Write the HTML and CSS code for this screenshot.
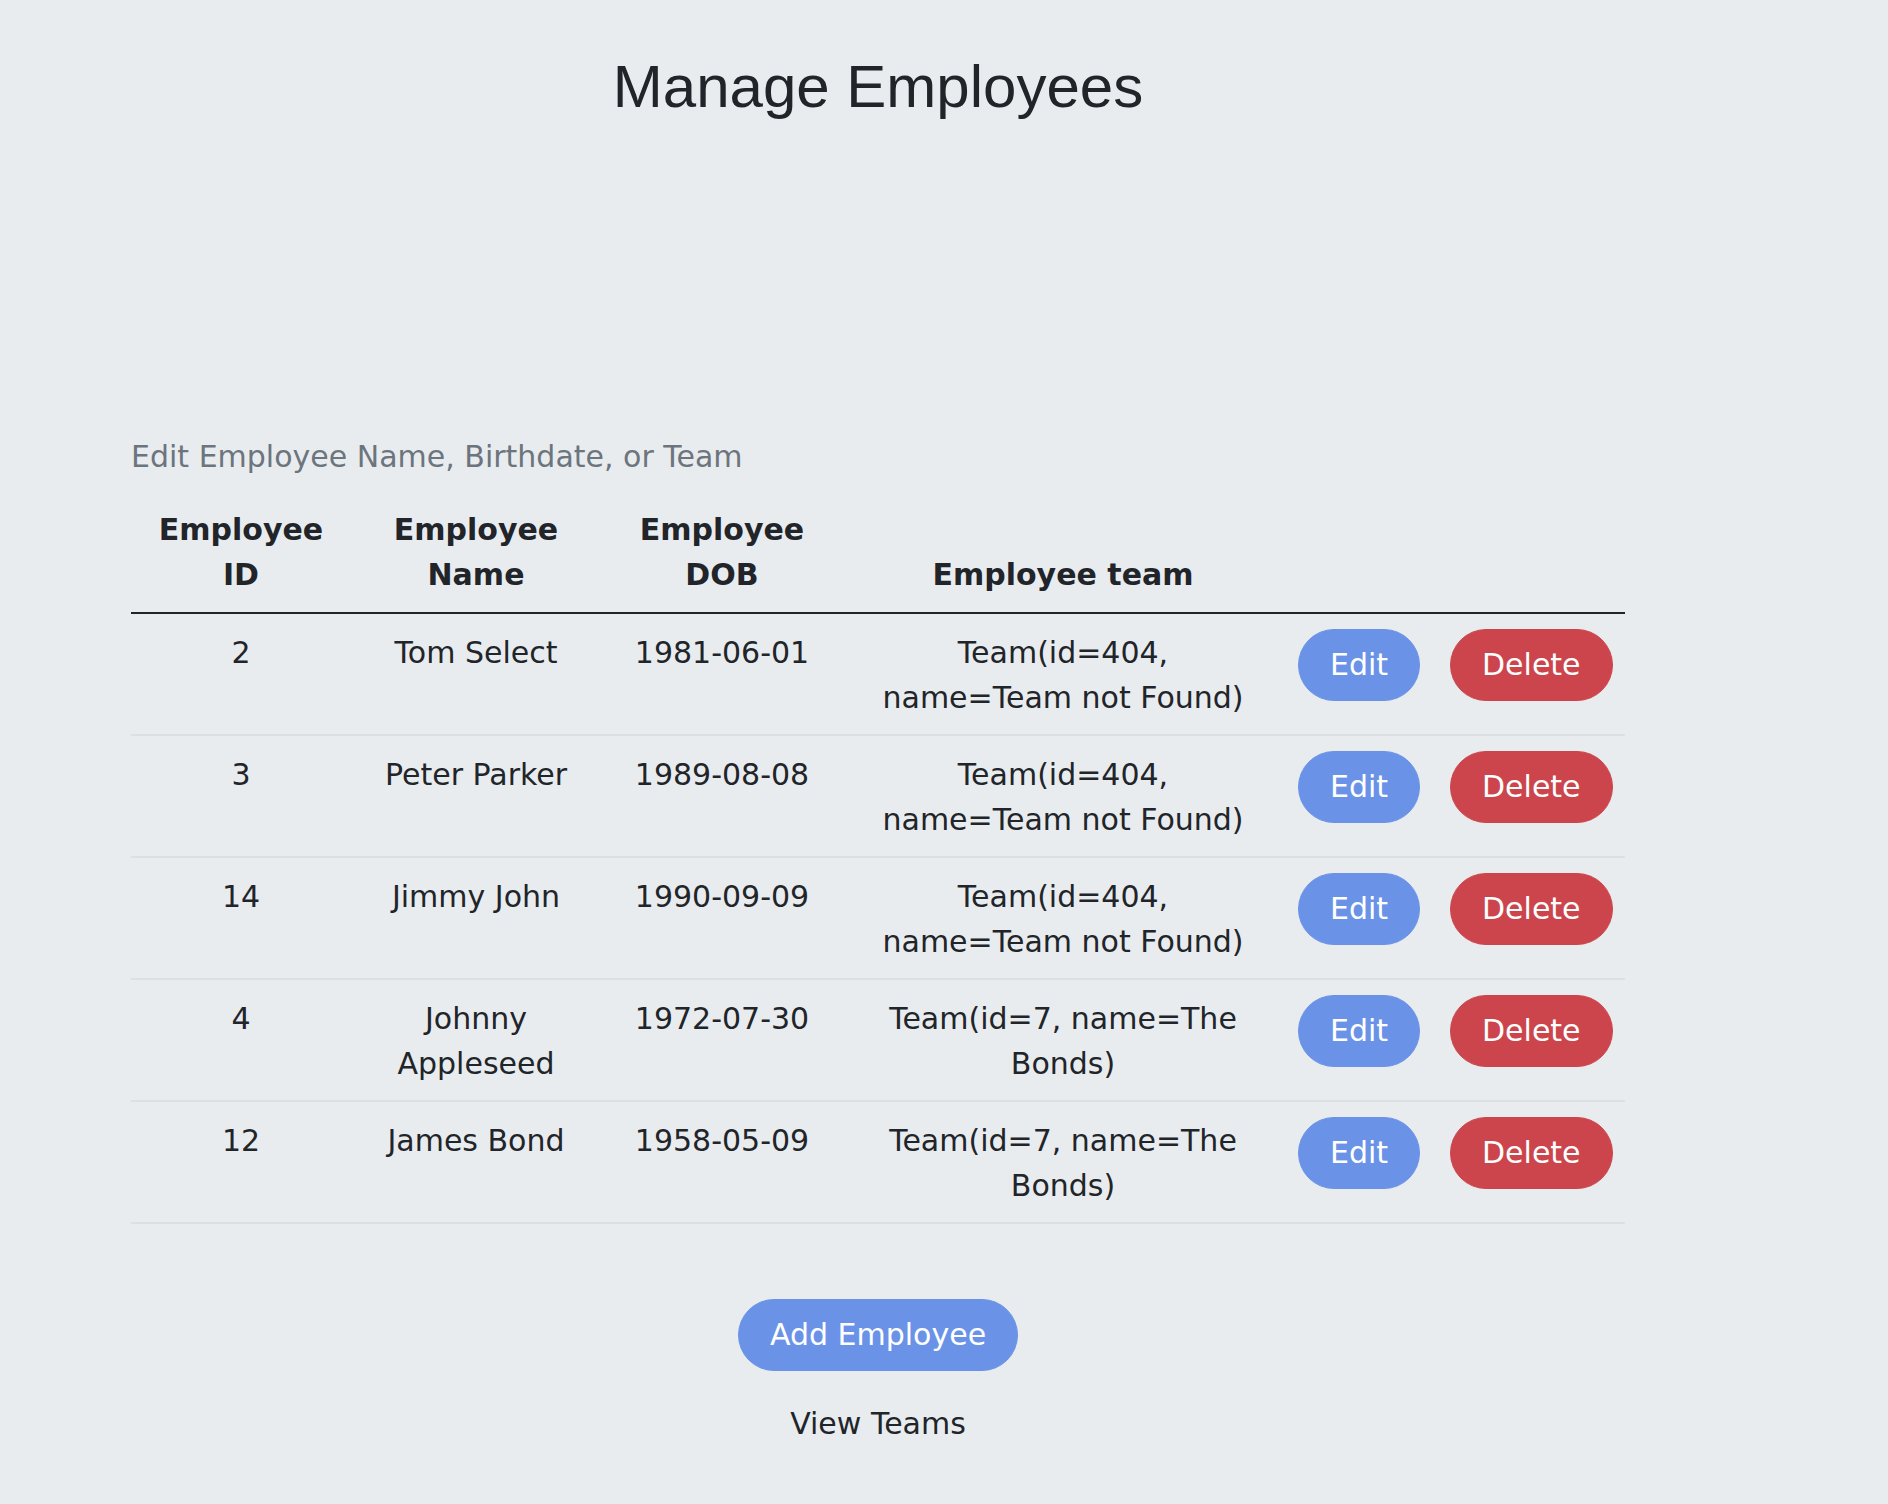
FILE: index.html
```html
<!DOCTYPE html>
<html lang="en">
<head>
<meta charset="utf-8">
<title>Manage Employees</title>
<link rel="stylesheet" href="styles.css">
</head>
<body>
<div class="page">
  <h1 class="title">Manage Employees</h1>
  <div class="table-wrap">
    <table class="emp-table">
      <caption class="emp-caption">Edit Employee Name, Birthdate, or Team</caption>
      <colgroup>
        <col class="c-id">
        <col class="c-name">
        <col class="c-dob">
        <col class="c-team">
        <col class="c-edit">
        <col class="c-del">
      </colgroup>
      <thead>
        <tr>
          <th>Employee ID</th>
          <th>Employee Name</th>
          <th>Employee DOB</th>
          <th>Employee team</th>
          <th></th>
          <th></th>
        </tr>
      </thead>
      <tbody>
        <tr>
          <td>2</td>
          <td>Tom Select</td>
          <td>1981-06-01</td>
          <td class="team-cell">Team(id=404, name=Team not Found)</td>
          <td class="action-cell"><a class="btn btn-edit">Edit</a></td>
          <td class="action-cell"><a class="btn btn-delete">Delete</a></td>
        </tr>
        <tr>
          <td>3</td>
          <td>Peter Parker</td>
          <td>1989-08-08</td>
          <td class="team-cell">Team(id=404, name=Team not Found)</td>
          <td class="action-cell"><a class="btn btn-edit">Edit</a></td>
          <td class="action-cell"><a class="btn btn-delete">Delete</a></td>
        </tr>
        <tr>
          <td>14</td>
          <td>Jimmy John</td>
          <td>1990-09-09</td>
          <td class="team-cell">Team(id=404, name=Team not Found)</td>
          <td class="action-cell"><a class="btn btn-edit">Edit</a></td>
          <td class="action-cell"><a class="btn btn-delete">Delete</a></td>
        </tr>
        <tr>
          <td>4</td>
          <td>Johnny Appleseed</td>
          <td>1972-07-30</td>
          <td class="team-cell">Team(id=7, name=The Bonds)</td>
          <td class="action-cell"><a class="btn btn-edit">Edit</a></td>
          <td class="action-cell"><a class="btn btn-delete">Delete</a></td>
        </tr>
        <tr>
          <td>12</td>
          <td>James Bond</td>
          <td>1958-05-09</td>
          <td class="team-cell">Team(id=7, name=The Bonds)</td>
          <td class="action-cell"><a class="btn btn-edit">Edit</a></td>
          <td class="action-cell"><a class="btn btn-delete">Delete</a></td>
        </tr>
      </tbody>
    </table>
  </div>
  <div class="footer-actions">
    <a class="btn btn-edit btn-add">Add Employee</a>
    <a class="text-link">View Teams</a>
  </div>
</div>
</body>
</html>
```

FILE: styles.css
```css
html, body {
  margin: 0;
  padding: 0;
}

body {
  background: #e9ecef;
  color: #212529;
  font-family: "DejaVu Sans", Verdana, sans-serif;
  font-size: 30px;
  line-height: 1.5;
}

.page {
  width: 1494px;
  margin-left: 131px;
  padding-bottom: 60px;
}

.title {
  margin: 51px 0 0;
  font-family: "Liberation Sans", Arial, Helvetica, sans-serif;
  font-size: 60px;
  font-weight: 400;
  line-height: 72px;
  text-align: center;
  color: #212529;
}

.table-wrap {
  margin-top: 311px;
}

.emp-table {
  width: 1494px;
  table-layout: fixed;
  border-collapse: collapse;
}

.emp-caption {
  caption-side: top;
  text-align: left;
  color: #6c757d;
  padding: 0 0 13px;
}

.c-id { width: 220px; }
.c-name { width: 250px; }
.c-dob { width: 242px; }
.c-team { width: 440px; }
.c-edit { width: 152px; }
.c-del { width: 190px; }

.emp-table th {
  padding: 15px;
  font-weight: 700;
  text-align: center;
  vertical-align: bottom;
  border-bottom: 2px solid #212529;
}

.emp-table td {
  padding: 16px 15px 14px;
  text-align: center;
  vertical-align: top;
  border-bottom: 2px solid #dcdfe3;
}

.emp-table td.team-cell {
  padding-left: 30px;
  padding-right: 30px;
}

.emp-table td.action-cell {
  padding-top: 15px;
  padding-bottom: 15px;
  white-space: nowrap;
}

.btn {
  display: inline-block;
  vertical-align: top;
  height: 70px;
  line-height: 70px;
  padding: 0 31px;
  border: 1px solid transparent;
  border-radius: 40px;
  color: #ffffff;
  font-family: "DejaVu Sans", Verdana, sans-serif;
  font-size: 30px;
  text-decoration: none;
  cursor: pointer;
  white-space: nowrap;
}

.btn-edit {
  background: #6a93e8;
  border-color: #6a93e8;
}

.btn-delete {
  background: #cc454c;
  border-color: #cc454c;
}

.footer-actions {
  display: flex;
  flex-direction: column;
  align-items: center;
  margin-top: 75px;
}

.btn-add {
  margin: 0;
}

.text-link {
  margin-top: 30px;
  color: #212529;
  text-decoration: none;
}
```
